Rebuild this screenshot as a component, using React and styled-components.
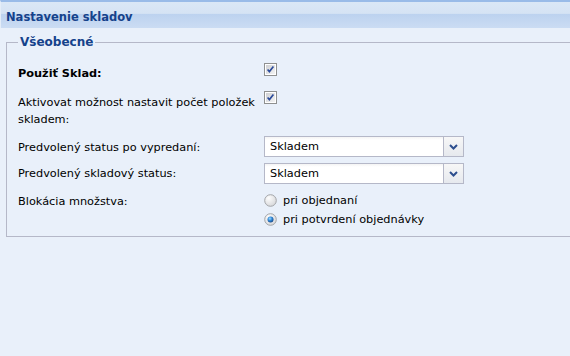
import styled, { createGlobalStyle } from 'styled-components';

const GlobalStyle = createGlobalStyle`
  body {
    margin: 0;
    background: #e9f0fa;
  }
`;

const Page = styled.div`
  min-height: 356px;
  background: #e9f0fa;
  overflow: hidden;
  font-family: "DejaVu Sans", Tahoma, sans-serif;
  font-size: 11.3px;
  color: #000;
`;

const Header = styled.div`
  border-top: 2px solid #99bbe8;
  border-left: 1px solid #e4edf8;
  padding: 4px 0 0 5px;
  line-height: 22px;
  background: linear-gradient(
    to bottom,
    #dae7f6 0,
    #d5e3f4 44%,
    #bcd2ef 46%,
    #cbdcf3 100%
  );
  color: #15428b;
  font-size: 11.5px;
  font-weight: bold;
`;

const Body = styled.div`
  padding: 7px 0 0 6px;
`;

const Fieldset = styled.fieldset`
  margin: 0 -40px 0 0;
  border: 1px solid #b5b8c8;
  padding: 13px 11px 7px;
`;

const Legend = styled.legend`
  padding: 0 2px;
  margin-left: 0;
  color: #15428b;
  font-weight: bold;
  font-size: 12px;
  line-height: 15px;
`;

const Row = styled.div`
  display: flex;
  align-items: flex-start;
  margin-top: ${({ $mt }) => $mt || 0}px;
`;

const Label = styled.label`
  flex: none;
  box-sizing: border-box;
  width: 246px;
  padding: ${({ $pt }) => $pt}px 4px 0 0;
  line-height: 17px;
  font-weight: ${({ $bold }) => ($bold ? 'bold' : 'normal')};
`;

const Field = styled.div`
  flex: none;
`;

const SelectBox = styled.div`
  display: flex;
  width: 200px;
  height: 21px;
`;

const SelectValue = styled.div`
  flex: 1;
  border: 1px solid #b5b8c8;
  border-right: none;
  background: linear-gradient(to bottom, #f4f4f4 0, #fff 3px, #fff 100%);
  padding: 1px 0 0 5px;
  line-height: 18px;
`;

const Trigger = styled.div`
  width: 19px;
  border: 1px solid #b5b8c8;
  background: linear-gradient(to bottom, #f7f7f7, #e6e9ee);
  display: flex;
  align-items: center;
  justify-content: center;
`;

const RadioGroup = styled.div`
  display: flex;
  flex-direction: column;
`;

const RadioOption = styled.div`
  display: flex;
  align-items: center;
  gap: 6px;
  height: 19px;
`;

const Checkbox = () => (
  <svg width="13" height="13" viewBox="0 0 13 13">
    <defs>
      <linearGradient id="cbFill" x1="0" y1="0" x2="1" y2="1">
        <stop offset="0" stopColor="#cfd0d3" />
        <stop offset="1" stopColor="#f3f3f3" />
      </linearGradient>
    </defs>
    <rect x="0.5" y="0.5" width="12" height="12" fill="#fff" stroke="#8f9090" />
    <rect x="2" y="2" width="9" height="9" fill="url(#cbFill)" />
    <path
      d="M3.6 6.4 L5.4 8.6 L9.4 3.4"
      fill="none"
      stroke="#2a4a9a"
      strokeWidth="1.6"
    />
  </svg>
);

const Radio = ({ checked }) => (
  <svg width="13" height="13" viewBox="0 0 13 13">
    <defs>
      <radialGradient id="rbFill" cx="0.35" cy="0.3" r="0.8">
        <stop offset="0" stopColor="#fdfdfd" />
        <stop offset="1" stopColor="#d4d5d8" />
      </radialGradient>
      <radialGradient id="rbDot" cx="0.4" cy="0.35" r="0.7">
        <stop offset="0" stopColor="#9fdcff" />
        <stop offset="0.5" stopColor="#2f86d6" />
        <stop offset="1" stopColor="#17427e" />
      </radialGradient>
    </defs>
    <circle cx="6.5" cy="6.5" r="5.8" fill="url(#rbFill)" stroke="#a3a5a8" />
    {checked && <circle cx="6.5" cy="6.5" r="3" fill="url(#rbDot)" />}
  </svg>
);

const Chevron = () => (
  <svg width="9" height="6" viewBox="0 0 9 6">
    <path d="M1 1 L4.5 4.5 L8 1" fill="none" stroke="#2d4f8e" strokeWidth="2" />
  </svg>
);

const Select = ({ value }) => (
  <SelectBox>
    <SelectValue>{value}</SelectValue>
    <Trigger>
      <Chevron />
    </Trigger>
  </SelectBox>
);

export default function App() {
  return (
    <Page>
      <GlobalStyle />
      <Header>Nastavenie skladov</Header>
      <Body>
        <Fieldset>
          <Legend>Všeobecné</Legend>

          <Row>
            <Label $pt={2} $bold>Použiť Sklad:</Label>
            <Field>
              <Checkbox />
            </Field>
          </Row>

          <Row $mt={9}>
            <Label $pt={3}>Aktivovat možnost nastavit počet položek skladem:</Label>
            <Field>
              <Checkbox />
            </Field>
          </Row>

          <Row $mt={8}>
            <Label $pt={3}>Predvolený status po vypredaní:</Label>
            <Field>
              <Select value="Skladem" />
            </Field>
          </Row>

          <Row $mt={6}>
            <Label $pt={2}>Predvolený skladový status:</Label>
            <Field>
              <Select value="Skladem" />
            </Field>
          </Row>

          <Row $mt={7}>
            <Label $pt={2}>Blokácia množstva:</Label>
            <RadioGroup>
              <RadioOption>
                <Radio />
                pri objednaní
              </RadioOption>
              <RadioOption>
                <Radio checked />
                pri potvrdení objednávky
              </RadioOption>
            </RadioGroup>
          </Row>
        </Fieldset>
      </Body>
    </Page>
  );
}
